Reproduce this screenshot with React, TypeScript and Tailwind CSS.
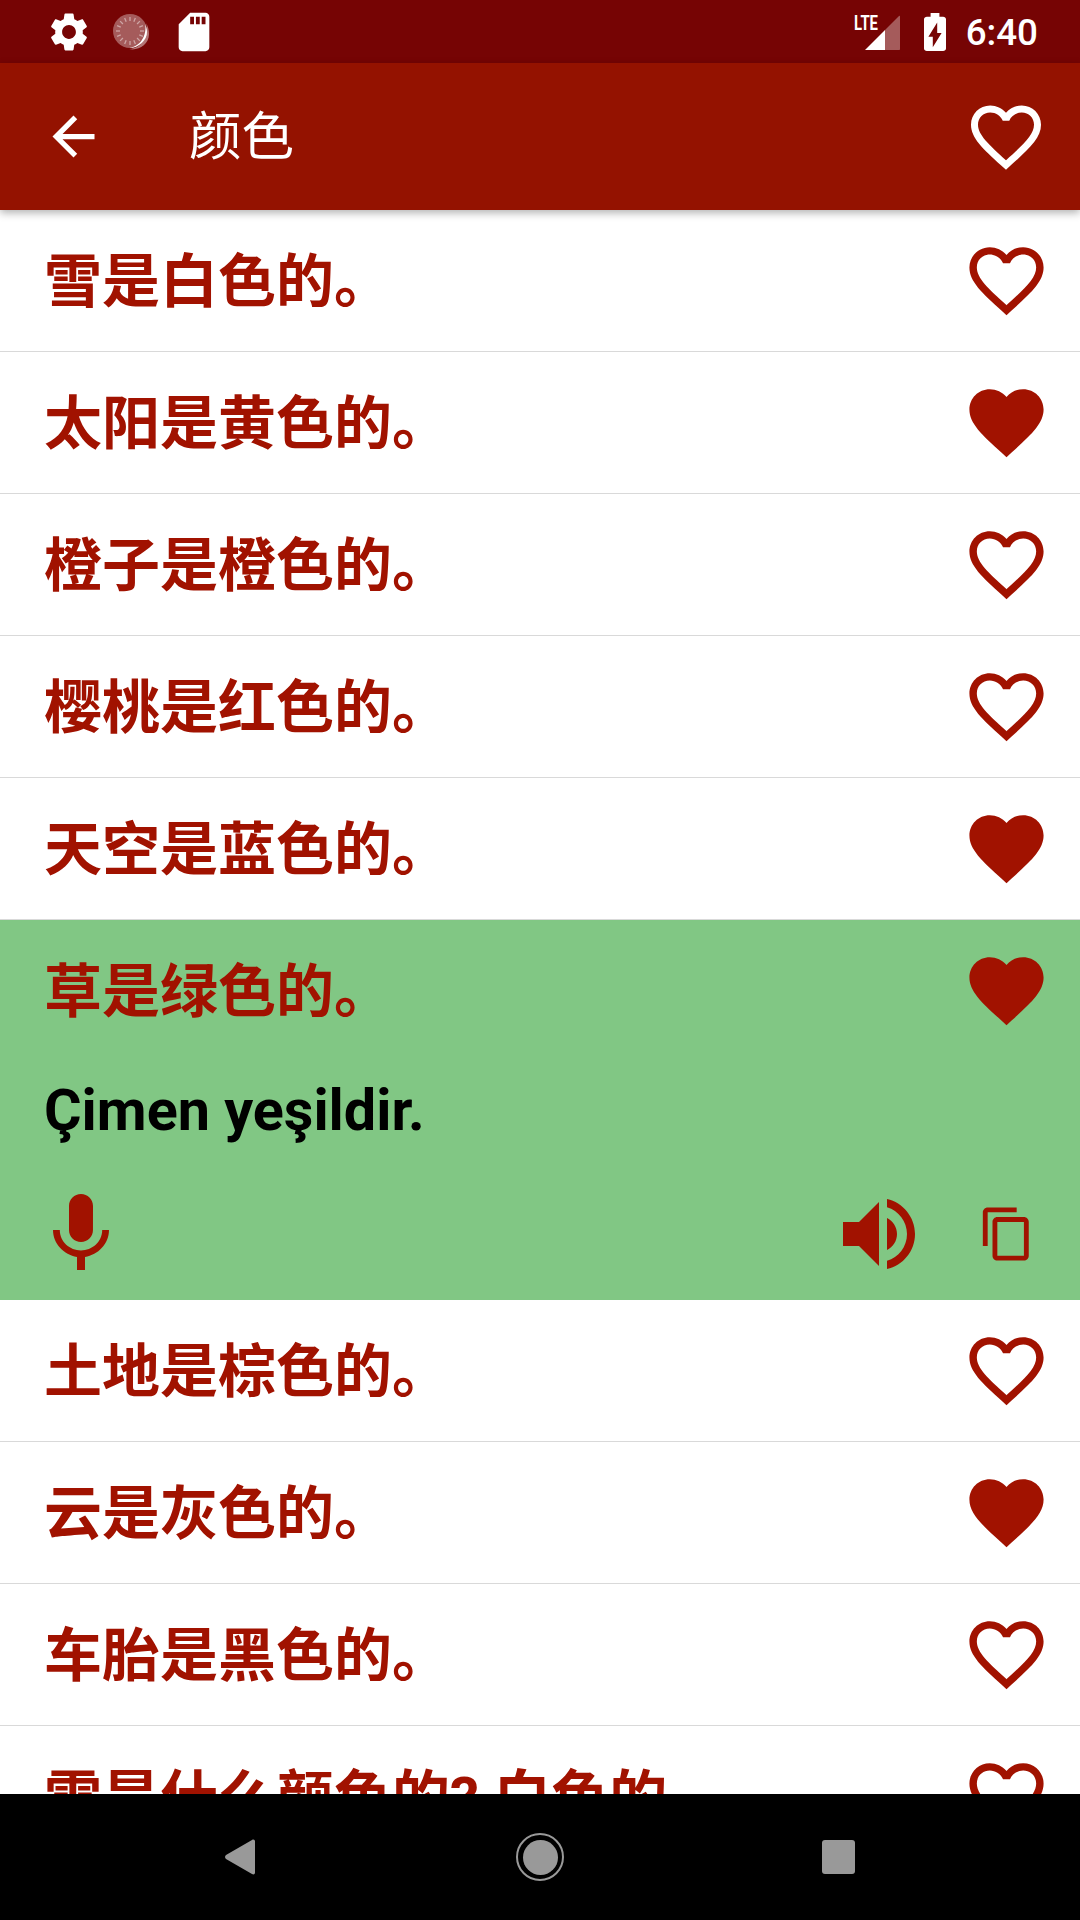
const heartOutline =
  "M16.5 3c-1.74 0-3.41.81-4.5 2.09C10.91 3.81 9.24 3 7.5 3 4.42 3 2 5.42 2 8.5c0 3.78 3.4 6.86 8.55 11.54L12 21.35l1.45-1.32C18.6 15.36 22 12.28 22 8.5 22 5.42 19.58 3 16.5 3zm-4.4 15.55l-.1.1-.1-.1C7.14 14.24 4 11.39 4 8.5 4 6.5 5.5 5 7.5 5c1.54 0 3.04.99 3.57 2.36h1.87C13.46 5.99 14.96 5 16.5 5c2 0 3.5 1.5 3.5 3.5 0 2.89-3.14 5.74-7.9 10.05z";
const heartFilled =
  "M12 21.35l-1.45-1.32C5.4 15.36 2 12.28 2 8.5 2 5.42 4.42 3 7.5 3c1.74 0 3.41.81 4.5 2.09C13.09 3.81 14.76 3 16.5 3 19.58 3 22 5.42 22 8.5c0 3.78-3.4 6.86-8.55 11.54L12 21.35z";

function Icon({ d, className }: { d: string; className: string }) {
  return (
    <svg viewBox="0 0 24 24" className={className} fill="currentColor">
      <path d={d} />
    </svg>
  );
}

function Heart({ filled }: { filled: boolean }) {
  return <Icon d={filled ? heartFilled : heartOutline} className="w-[89px] h-[89px] shrink-0 text-[#a11200]" />;
}

function LoadingDisc() {
  const ticks = Array.from({ length: 16 }, (_, i) => (i * 360) / 16);
  return (
    <svg viewBox="0 0 38 38" className="w-[38px] h-[38px] ml-[20px] mr-[21px]">
      <circle cx="18" cy="18" r="17" fill="#fff" fillOpacity="0.35" />
      {ticks.map((a) => (
        <line
          key={a}
          x1="18"
          y1="4"
          x2="18"
          y2="8"
          stroke="#fff"
          strokeOpacity="0.45"
          strokeWidth="1.3"
          transform={`rotate(${a} 18 18)`}
        />
      ))}
      <path d="M34 10c3 8-1 25-17 26 9 2 20-4 20-15 0-4-1-8-3-11z" fill="#fff" fillOpacity="0.45" />
      <path d="M33 11c2 8-2 22-16 24 10 0 18-8 18-16 0-3-1-6-2-8z" fill="#fff" />
    </svg>
  );
}

function StatusBar() {
  return (
    <div className="h-[63px] shrink-0 bg-[#760404] flex items-center justify-between pl-[46px] pr-[42px] text-white">
      <div className="flex items-center">
        <Icon
          className="w-[46px] h-[46px]"
          d="M19.14 12.94c.04-.3.06-.61.06-.94 0-.32-.02-.64-.07-.94l2.03-1.58c.18-.14.23-.41.12-.61l-1.92-3.32c-.12-.22-.37-.29-.59-.22l-2.39.96c-.5-.38-1.03-.7-1.62-.94l-.36-2.54c-.04-.24-.24-.41-.48-.41h-3.84c-.24 0-.43.17-.47.41l-.36 2.54c-.59.24-1.13.57-1.62.94l-2.39-.96c-.22-.08-.47 0-.59.22L2.74 8.87c-.12.21-.08.47.12.61l2.03 1.58c-.05.3-.09.63-.09.94s.02.64.07.94l-2.03 1.58c-.18.14-.23.41-.12.61l1.92 3.32c.12.22.37.29.59.22l2.39-.96c.5.38 1.03.7 1.62.94l.36 2.54c.05.24.24.41.48.41h3.84c.24 0 .44-.17.47-.41l.36-2.54c.59-.24 1.13-.56 1.62-.94l2.39.96c.22.08.47 0 .59-.22l1.92-3.32c.12-.22.07-.47-.12-.61l-2.01-1.58zM12 15.6c-1.98 0-3.6-1.62-3.6-3.6s1.62-3.6 3.6-3.6 3.6 1.62 3.6 3.6-1.62 3.6-3.6 3.6z"
        />
        <LoadingDisc />
        <Icon
          className="w-[46px] h-[46px]"
          d="M18 2h-8L4.02 8 4 20c0 1.1.9 2 2 2h12c1.1 0 2-.9 2-2V4c0-1.1-.9-2-2-2zm-6 6h-2V4h2v4zm3 0h-2V4h2v4zm3 0h-2V4h2v4z"
        />
      </div>
      <div className="flex items-center">
        <svg viewBox="0 0 50 40" className="w-[50px] h-[40px]">
          <text
            x="2"
            y="18"
            fontSize="21"
            fontWeight="700"
            fontFamily="Roboto, sans-serif"
            textLength="24"
            lengthAdjust="spacingAndGlyphs"
            fill="#fff"
          >
            LTE
          </text>
          <path d="M13 38l20-20v20z" fill="#fff" />
          <path d="M33 18L47 4c.5-.5 1-.2 1 .5V37c0 .6-.4 1-1 1H33z" fill="#fff" fillOpacity="0.35" />
        </svg>
        <svg viewBox="7 2 10 20" preserveAspectRatio="none" className="w-[22px] h-[38px] ml-[22px]" fill="#fff">
          <path d="M15.67 4H14V2h-4v2H8.33C7.6 4 7 4.6 7 5.33v15.33C7 21.4 7.6 22 8.33 22h7.33c.74 0 1.34-.6 1.34-1.33V5.33C17 4.6 16.4 4 15.67 4zM11 20v-5.5H9L13 7v5.5h2L11 20z" />
        </svg>
        <span className="ml-[20px] pt-[3px] text-[36.75px] leading-none font-medium">6:40</span>
      </div>
    </div>
  );
}

function Header() {
  return (
    <header className="relative z-10 h-[147px] shrink-0 bg-[#941200] flex items-center pl-[42px] pr-[32px] text-white shadow-[0_3px_8px_rgba(0,0,0,0.3)]">
      <Icon
        className="w-[63px] h-[63px]"
        d="M20 11H7.83l5.59-5.59L12 4l-8 8 8 8 1.41-1.41L7.83 13H20v-2z"
      />
      <h1 className="ml-[84px] pt-[2px] text-[52.5px] leading-none font-normal">颜色</h1>
      <Icon d={heartOutline} className="ml-auto w-[84px] h-[84px]" />
    </header>
  );
}

function Phrase({ text, fav }: { text: string; fav: boolean }) {
  return (
    <div className="h-[142px] shrink-0 flex items-center justify-between pl-[44px] pr-[29px] border-b border-[#d9d9d9] bg-white">
      <span className="pt-[3px] text-[58px] leading-none font-bold whitespace-nowrap text-[#a11200]">{text}</span>
      <Heart filled={fav} />
    </div>
  );
}

function OpenPhrase() {
  return (
    <div className="h-[380px] shrink-0 bg-[#81c784] flex flex-col">
      <div className="h-[141px] shrink-0 flex items-center justify-between pl-[44px] pr-[29px]">
        <span className="pt-[3px] text-[58px] leading-none font-bold text-[#a11200]">草是绿色的。</span>
        <Heart filled />
      </div>
      <div className="h-[107px] shrink-0 flex items-center pl-[44px] pb-[7px] text-[57.5px] leading-none font-bold text-black">
        Çimen yeşildir.
      </div>
      <div className="flex-1 flex items-center pl-[33px] pr-[44px] text-[#a11200]">
        <Icon
          className="w-[96px] h-[96px]"
          d="M12 14c1.66 0 2.99-1.34 2.99-3L15 5c0-1.66-1.34-3-3-3S9 3.34 9 5v6c0 1.66 1.34 3 3 3zm5.3-3c0 3-2.54 5.1-5.3 5.1S6.7 14 6.7 11H5c0 3.41 2.72 6.23 6 6.72V21h2v-3.28c3.28-.48 6-3.3 6-6.72h-1.7z"
        />
        <Icon
          className="ml-auto w-[96px] h-[96px]"
          d="M3 9v6h4l5 5V4L7 9H3zm13.5 3c0-1.77-1.02-3.29-2.5-4.03v8.05c1.48-.73 2.5-2.25 2.5-4.02zM14 3.23v2.06c2.89.86 5 3.54 5 6.71s-2.11 5.85-5 6.71v2.06c4.01-.91 7-4.49 7-8.77s-2.99-7.86-7-8.77z"
        />
        <Icon
          className="ml-[51px] w-[58px] h-[58px]"
          d="M16 1H4c-1.1 0-2 .9-2 2v14h2V3h12V1zm3 4H8c-1.1 0-2 .9-2 2v14c0 1.1.9 2 2 2h11c1.1 0 2-.9 2-2V7c0-1.1-.9-2-2-2zm0 16H8V7h11v14z"
        />
      </div>
    </div>
  );
}

function NavBar() {
  return (
    <div className="h-[126px] shrink-0 bg-black flex items-center pl-[225px]">
      <svg viewBox="0 0 31 36" className="w-[31px] h-[36px]" fill="#999">
        <path d="M1 16L27 1c1.500-1 3-.3 3 1.500v31c0 1.800-1.500 2.500-3 1.500L1 20c-1.300-1-1.300-3 0-4z" />
      </svg>
      <div className="ml-[260px] w-[48px] h-[48px] rounded-full border-2 border-[#999] flex items-center justify-center">
        <div className="w-[35px] h-[35px] rounded-full bg-[#999]" />
      </div>
      <div className="ml-[258px] w-[33px] h-[34px] rounded-[3px] bg-[#999]" />
    </div>
  );
}

const before = [
  { text: "雪是白色的。", fav: false },
  { text: "太阳是黄色的。", fav: true },
  { text: "橙子是橙色的。", fav: false },
  { text: "樱桃是红色的。", fav: false },
  { text: "天空是蓝色的。", fav: true },
];

const after = [
  { text: "土地是棕色的。", fav: false },
  { text: "云是灰色的。", fav: true },
  { text: "车胎是黑色的。", fav: false },
  { text: "雪是什么颜色的? 白色的。", fav: false },
];

export default function App() {
  return (
    <div className="w-[1080px] h-[1920px] flex flex-col overflow-hidden bg-white font-[family-name:Roboto,'Noto_Sans_CJK_SC',sans-serif]">
      <StatusBar />
      <Header />
      <main className="flex-1 min-h-0 flex flex-col overflow-hidden">
        {before.map((p) => (
          <Phrase key={p.text} {...p} />
        ))}
        <OpenPhrase />
        {after.map((p) => (
          <Phrase key={p.text} {...p} />
        ))}
      </main>
      <NavBar />
    </div>
  );
}
